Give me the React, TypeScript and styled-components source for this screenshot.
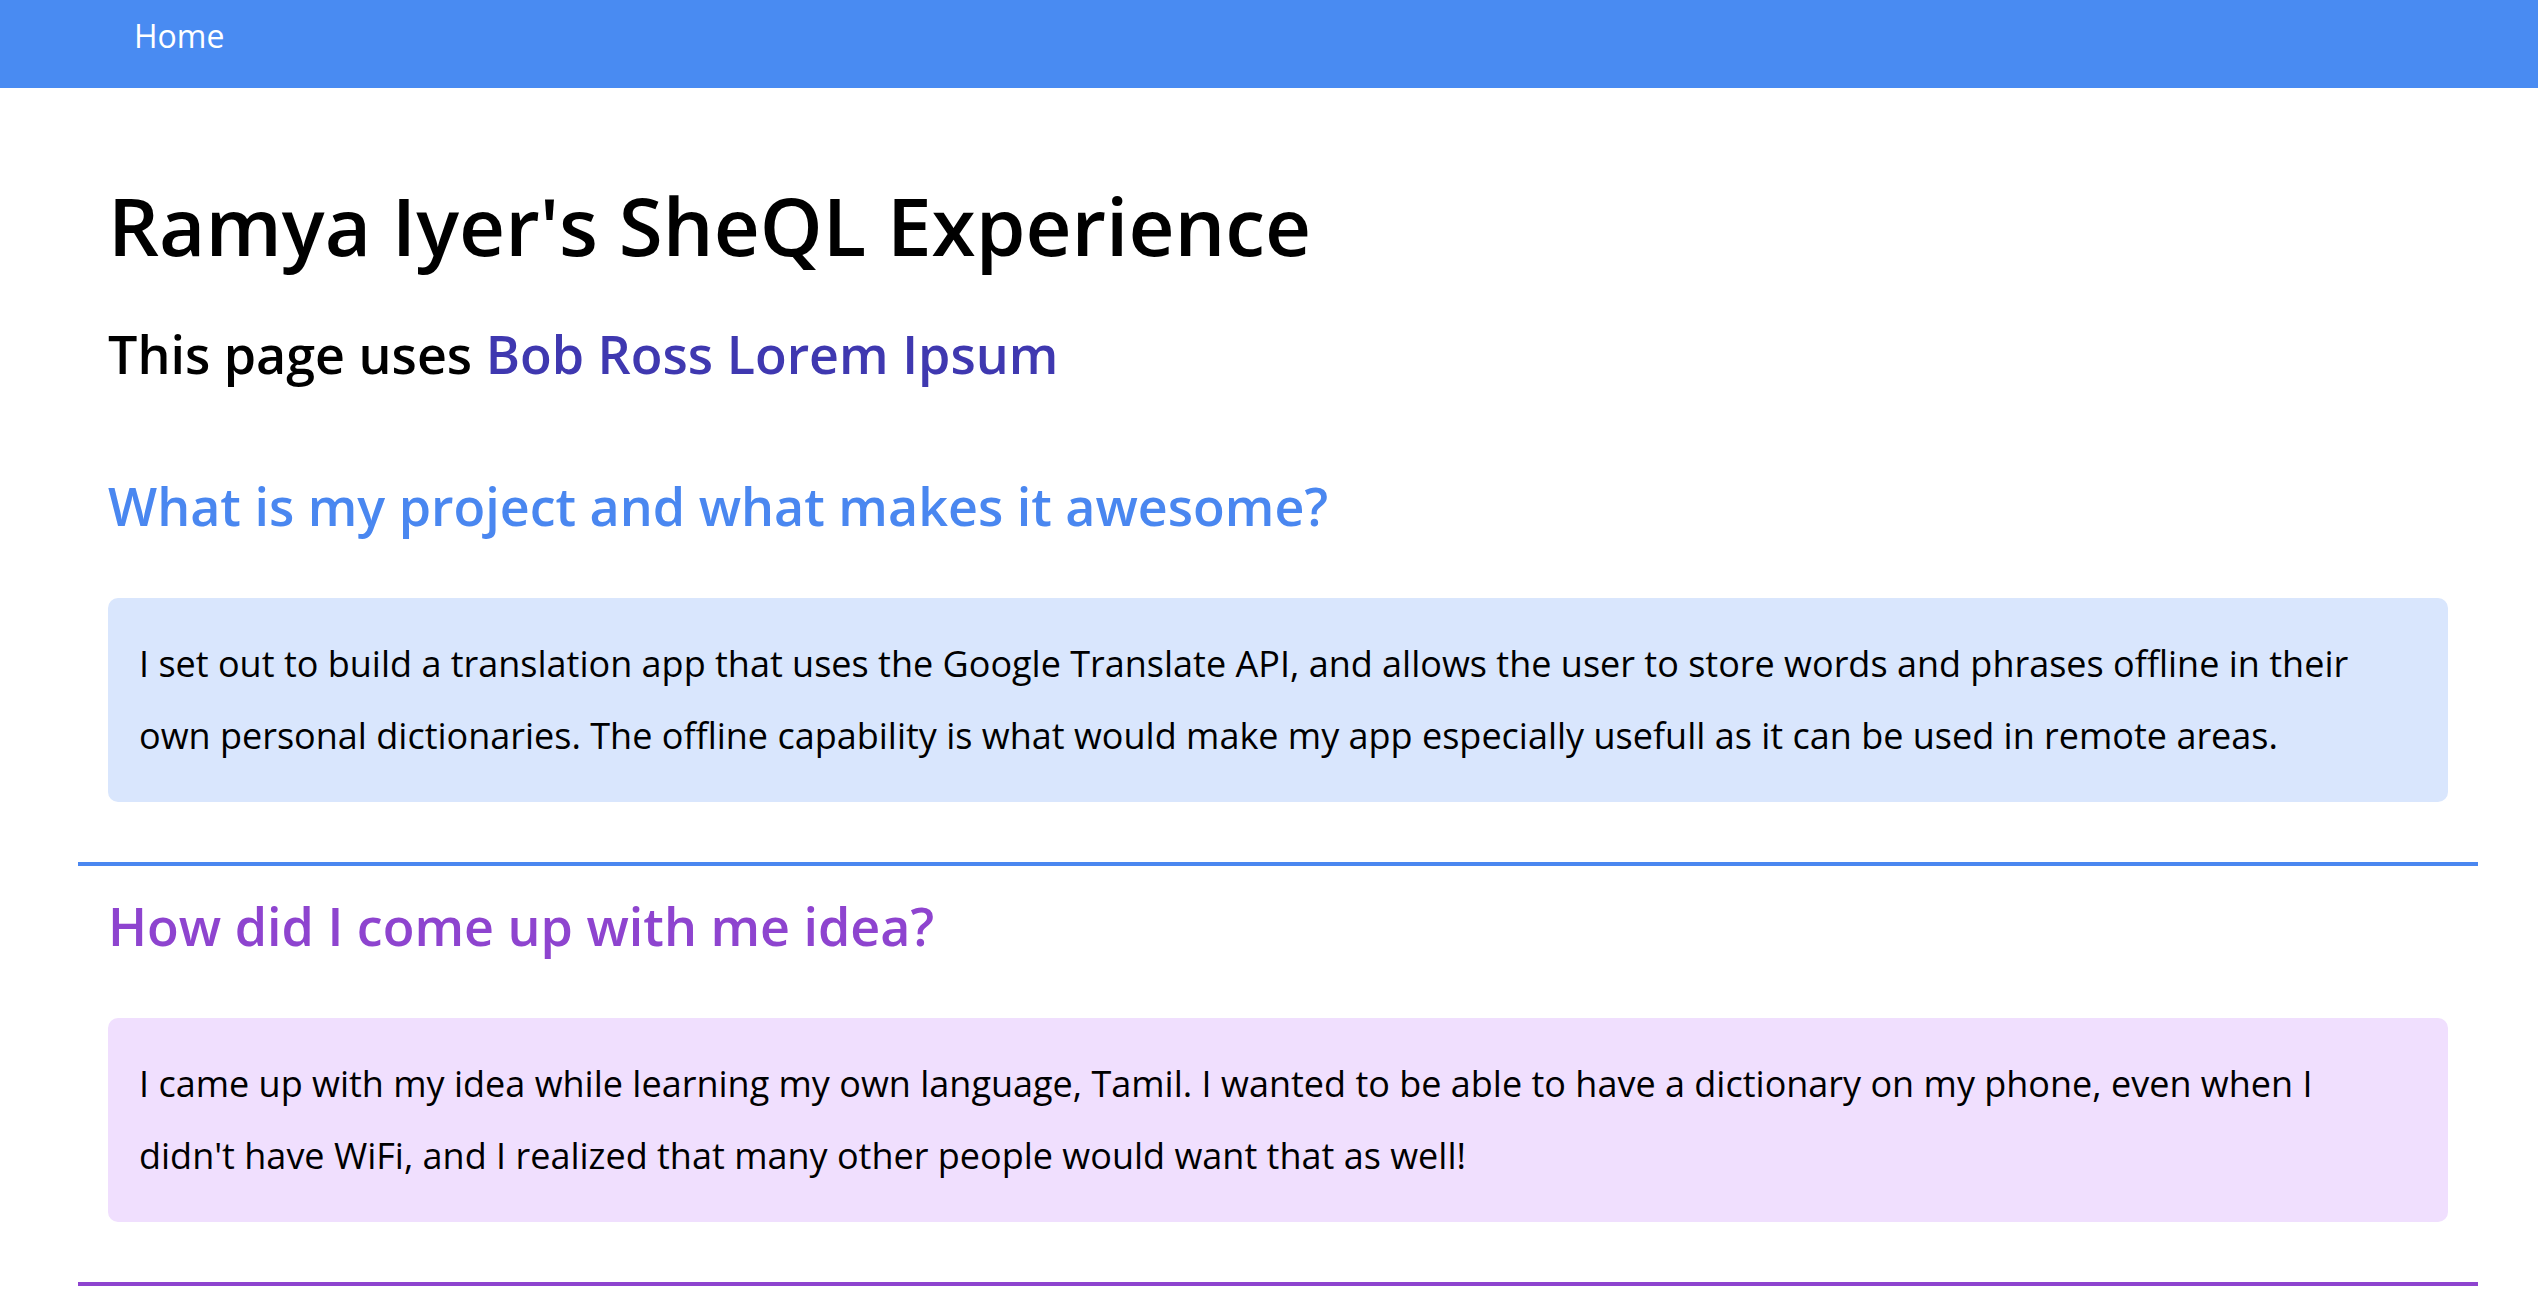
import React from "react";
import styled, { createGlobalStyle } from "styled-components";

const GlobalStyle = createGlobalStyle`
  html, body {
    margin: 0;
    padding: 0;
    background: #ffffff;
    font-family: "Open Sans", "Noto Sans", sans-serif;
    color: #000000;
  }
`;

const NavBar = styled.nav`
  height: 88px;
  background: #498bf2;
  display: flex;
  align-items: flex-start;
  padding: 14px 0 0 134px;
  box-sizing: border-box;
`;

const NavLink = styled.a`
  font-size: 32px;
  color: #ffffff;
  text-decoration: none;
  line-height: normal;
`;

const Container = styled.main`
  width: 2400px;
  margin-left: 78px;
  display: flex;
  flex-direction: column;
`;

const Header = styled.header`
  padding: 89px 30px 0;
  display: flex;
  flex-direction: column;
`;

const Title = styled.h1`
  margin: 0;
  font-size: 80px;
  font-weight: 600;
  line-height: 96px;
`;

const Subtitle = styled.h2`
  margin: 50px 0 0;
  font-size: 52px;
  font-weight: 600;
  line-height: 62px;
`;

const Link = styled.a`
  color: #3f38b0;
  text-decoration: none;
`;

const Section = styled.section<{ $first?: boolean }>`
  display: flex;
  flex-direction: column;
  padding: ${(p) => (p.$first ? "90px" : "29px")} 30px 0;
`;

const SectionTitle = styled.h3<{ $color: string }>`
  margin: 0;
  font-size: 52px;
  font-weight: 600;
  line-height: 62px;
  color: ${(p) => p.$color};
`;

const Card = styled.div<{ $bg: string }>`
  margin-top: 61px;
  background: ${(p) => p.$bg};
  border-radius: 10px;
  padding: 30px 32px 30px 31px;
  font-size: 36px;
  line-height: 72px;
`;

const Rule = styled.hr<{ $color: string }>`
  margin: 60px 0 0;
  border: none;
  height: 4px;
  background: ${(p) => p.$color};
`;

export default function App() {
  return (
    <>
      <GlobalStyle />
      <NavBar>
        <NavLink href="#">Home</NavLink>
      </NavBar>
      <Container>
        <Header>
          <Title>Ramya Iyer's SheQL Experience</Title>
          <Subtitle>
            This page uses <Link href="#">Bob Ross Lorem Ipsum</Link>
          </Subtitle>
        </Header>
        <Section $first>
          <SectionTitle $color="#4a87f0">
            What is my project and what makes it awesome?
          </SectionTitle>
          <Card $bg="#d9e6fd">
            I set out to build a translation app that uses the Google Translate
            API, and allows the user to store words and phrases offline in their
            own personal dictionaries. The offline capability is what would make
            my app especially usefull as it can be used in remote areas.
          </Card>
        </Section>
        <Rule $color="#4a87f0" />
        <Section>
          <SectionTitle $color="#8e44cf">
            How did I come up with me idea?
          </SectionTitle>
          <Card $bg="#f0dffe">
            I came up with my idea while learning my own language, Tamil. I
            wanted to be able to have a dictionary on my phone, even when I
            didn't have WiFi, and I realized that many other people would want
            that as well!
          </Card>
        </Section>
        <Rule $color="#8e44cf" />
      </Container>
    </>
  );
}
